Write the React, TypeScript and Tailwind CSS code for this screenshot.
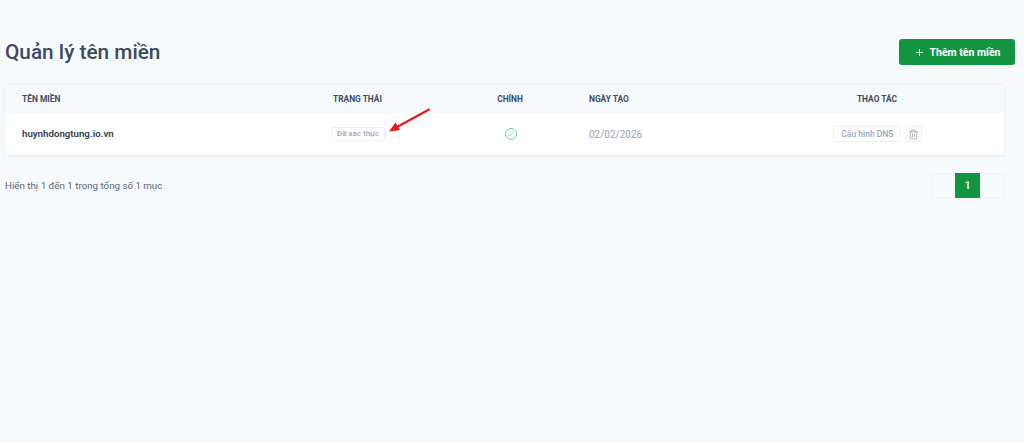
import { Check, Plus, Trash2 } from 'lucide-react';

const headerCell = 'text-[8.4px] font-bold uppercase text-[#3e4a5e]';

const StatusArrow = () => (
  <svg className="absolute left-[386px] top-[107px]" width="46" height="28" viewBox="0 0 46 28" fill="none">
    <path d="M43 2.5 L10 20.5" stroke="#f01414" strokeWidth="2" strokeLinecap="round" />
    <path d="M3 24.5 L9.5 15.5 L14 23 Z" fill="#f01414" />
  </svg>
);

export default function App() {
  return (
    <div className="relative h-[443px] w-[1024px] overflow-hidden bg-[#f7fafd] font-['Roboto',sans-serif]">
      <div className="pl-[5px] pr-[9px] pt-[39px]">
        <div className="flex h-[26px] items-center justify-between">
          <h1 className="text-[20.8px] font-medium leading-6 text-[#3b4a61]">Quản lý tên miền</h1>
          <button className="flex h-[26px] w-[116px] items-center justify-center gap-[5px] rounded-[3px] bg-[#129541] pt-px text-[10.5px] font-bold text-white">
            <Plus size={11} strokeWidth={1.75} />
            Thêm tên miền
          </button>
        </div>

        <div className="mr-[11px] mt-5 overflow-hidden rounded-[3px] border-b border-[#e6ebf2] bg-white shadow-[0_0_2px_rgba(120,140,170,0.3)]">
          <div className="grid h-7 grid-cols-[311px_132px_124px_178px_254px] items-center bg-[#f7fafd]">
            <div className={`${headerCell} pl-[17px]`}>Tên miền</div>
            <div className={`${headerCell} pl-[17px]`}>Trạng thái</div>
            <div className={`${headerCell} text-center`}>Chính</div>
            <div className={`${headerCell} pl-[17px]`}>Ngày tạo</div>
            <div className={`${headerCell} text-center`}>Thao tác</div>
          </div>
          <div className="grid h-[42px] grid-cols-[311px_132px_124px_178px_254px] items-center">
            <div className="pl-[17px] text-[9.7px] font-semibold text-[#2f3b4f]">huynhdongtung.io.vn</div>
            <div className="pl-[15px]">
              <span className="flex h-[14px] w-[54px] items-center justify-center rounded-[2px] border border-[#eef1f6] text-[8px] font-medium text-[#9aa7b8]">
                Đã xác thực
              </span>
            </div>
            <div className="flex justify-center pl-px">
              <span className="flex h-3 w-3 items-center justify-center rounded-full border border-[#4fd8ab]">
                <Check size={7} strokeWidth={2.25} className="text-[#4fd8ab]" />
              </span>
            </div>
            <div className="pl-[17px] text-[10px] text-[#9aa3b2]">02/02/2026</div>
            <div className="flex items-center justify-center gap-[6px]">
              <span className="flex h-4 w-[67px] items-center justify-end rounded-[2px] border border-[#eef1f6] pr-[5px] text-[8.5px] font-medium text-[#9aa7b8]">
                Cấu hình DNS
              </span>
              <span className="flex h-4 w-4 items-center justify-center rounded-[2px] border border-[#eef1f6] text-[#8b97a8]">
                <Trash2 size={11} strokeWidth={1.5} />
              </span>
            </div>
          </div>
        </div>

        <div className="mr-[10px] mt-[17px] flex h-[25px] items-center justify-between">
          <span className="pt-[2px] text-[9.75px] text-[#56647a]">Hiển thị 1 đến 1 trong tổng số 1 mục</span>
          <div className="flex h-[25px] w-[74px] rounded-[3px] border border-[#edf1f8]">
            <span className="w-[23px]" />
            <span className="-my-px flex w-[25px] items-center justify-center bg-[#129541] text-[10px] font-semibold text-white">1</span>
            <span className="flex-1" />
          </div>
        </div>
      </div>
      <StatusArrow />
    </div>
  );
}
